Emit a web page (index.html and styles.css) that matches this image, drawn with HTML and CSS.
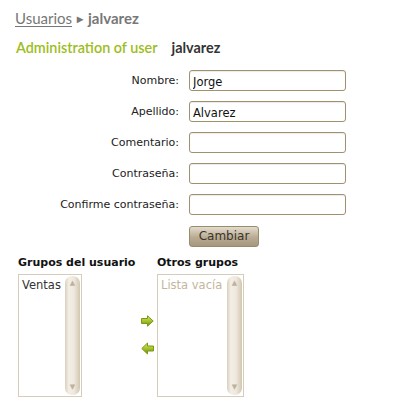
FILE: index.html
```html
<!DOCTYPE html>
<html>
<head>
<meta charset="utf-8">
<link rel="stylesheet" href="styles.css">
</head>
<body>
<div class="page">
  <div class="crumbs"><a class="crumb-link" href="#">Usuarios</a><span class="crumb-sep">▸</span><span class="crumb-cur">jalvarez</span></div>
  <h1 class="title"><span class="title-main">Administration of user</span><span class="title-user">jalvarez</span></h1>

  <form class="form">
    <label class="lbl">Nombre:</label><input class="field" type="text" value="Jorge">
    <label class="lbl">Apellido:</label><input class="field" type="text" value="Alvarez">
    <label class="lbl">Comentario:</label><input class="field" type="text" value="">
    <label class="lbl">Contraseña:</label><input class="field" type="password" value="">
    <label class="lbl">Confirme contraseña:</label><input class="field" type="password" value="">
    <span></span><div><button class="btn" type="button">Cambiar</button></div>
  </form>

  <div class="groups">
    <div class="gcol gcol-1">
      <div class="ghead">Grupos del usuario</div>
      <div class="lbox lbox-1">
        <div class="litems"><div class="item">Ventas</div></div>
        <div class="sbar"><span class="sarr">▲</span><span class="sarr">▼</span></div>
      </div>
    </div>
    <div class="arrows">
      <svg class="arr" width="13" height="12" viewBox="0 0 13 12"><defs><linearGradient id="g1" x1="0" y1="0" x2="0" y2="1"><stop offset="0" stop-color="#d4ea80"/><stop offset="0.45" stop-color="#a9c832"/><stop offset="1" stop-color="#6f8c0c"/></linearGradient></defs><path d="M0.5 3.5 H6.5 V0.8 L12.2 6 L6.5 11.2 V8.5 H0.5 Z" fill="url(#g1)" stroke="#7c9815" stroke-width="1"/></svg>
      <svg class="arr" width="13" height="13" viewBox="0 0 13 13"><defs><linearGradient id="g2" x1="0" y1="0" x2="0" y2="1"><stop offset="0" stop-color="#d4ea80"/><stop offset="0.45" stop-color="#a9c832"/><stop offset="1" stop-color="#6f8c0c"/></linearGradient></defs><path d="M12.5 4 H6.5 V1 L0.8 6.5 L6.5 12 V9 H12.5 Z" fill="url(#g2)" stroke="#7c9815" stroke-width="1"/></svg>
    </div>
    <div class="gcol gcol-2">
      <div class="ghead">Otros grupos</div>
      <div class="lbox lbox-2">
        <div class="litems"><div class="item empty">Lista vacía</div></div>
        <div class="sbar"><span class="sarr">▲</span><span class="sarr">▼</span></div>
      </div>
    </div>
  </div>
</div>
</body>
</html>
```
FILE: styles.css
```css
html, body { margin: 0; padding: 0; background: #fff; }
body { font-family: "DejaVu Sans", Verdana, sans-serif; color: #222; }
.page { padding: 6px 0 0 15px; }

.crumbs { font-family: Lato, "Open Sans", sans-serif; font-size: 15px; color: #777; height: 24px; line-height: 24px; font-weight: 600; }
.crumb-link { color: #777; text-decoration: underline; text-underline-offset: 2px; font-weight: 400; }
.crumb-sep { font-size: 12px; margin: 0 5px 0 5px; position: relative; top: -1px; }
.crumb-cur { color: #777; font-weight: 700; }

.title { margin: 8px 0 0 1px; font-family: Lato, "Open Sans", sans-serif; font-size: 14.4px; font-weight: 400; line-height: 20px; height: 22px; }
.title-main { color: #9cbd22; font-weight: 600; }
.title-user { color: #333; font-weight: 700; margin-left: 14px; }

.form { display: grid; grid-template-columns: 164px 157px; column-gap: 10px; row-gap: 10px; align-items: center; margin-top: 10px; }
.lbl { text-align: right; font-size: 11px; color: #222; }
.field { box-sizing: border-box; width: 157px; height: 21px; border: 1px solid #a0906e; border-radius: 3px; padding: 2px 3px 0; font-family: "DejaVu Sans", Verdana, sans-serif; font-size: 11.5px; color: #111; background: #fff; margin: 0; box-shadow: inset 0 1px 1px rgba(0,0,0,0.08); }
.btn { box-sizing: border-box; width: 70px; height: 21px; border: 1px solid #9a8a6e; border-radius: 3px; background: linear-gradient(#e3dbcd, #b9ab93 55%, #a6977c); font-family: "DejaVu Sans", Verdana, sans-serif; font-size: 12px; color: #3a3428; padding: 0; margin: 0; }

.groups { display: flex; gap: 4px; margin-top: 9px; padding-left: 3px; }
.gcol-1 { width: 119px; }
.ghead { font-weight: 700; font-size: 11px; color: #111; height: 18px; line-height: 14px; white-space: nowrap; }
.lbox { box-sizing: border-box; height: 123px; border: 1px solid #d6ccbb; display: flex; background: #fff; }
.lbox-1 { width: 64px; }
.lbox-2 { width: 87px; }
.litems { flex: 1; padding: 3px 0 0 3px; }
.item { font-size: 11.5px; color: #333; }
.item.empty { color: #c4b59c; }
.sbar { width: 15px; margin: 1px 1px 1px 0; border-radius: 7px; background: linear-gradient(90deg, #d9cfbd 0%, #f3eee6 25%, #efe8dd 60%, #d2c6b0 100%); display: flex; flex-direction: column; justify-content: space-between; align-items: center; padding: 3px 0 4px; box-sizing: border-box; }
.sarr { font-size: 7px; color: #bcb2a0; line-height: 8px; }

.arrows { width: 12px; margin-top: 18px; height: 123px; display: flex; flex-direction: column; align-items: center; justify-content: center; gap: 15px; }
.arr { display: block; }
```
